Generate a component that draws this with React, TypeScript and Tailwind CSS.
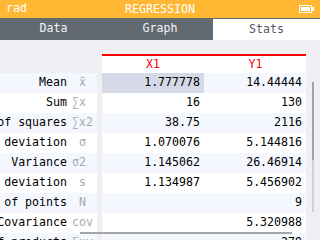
type Row = {
  name: string
  sym: string
  symPad?: boolean
  x: string
  y: string
}

const rows: Row[] = [
  { name: 'Mean', sym: 'x\u0304', symPad: true, x: '1.777778', y: '14.44444' },
  { name: 'Sum', sym: '∑x', x: '16', y: '130' },
  { name: 'Sum of squares', sym: '∑x2', x: '38.75', y: '2116' },
  { name: 'Standard deviation', sym: 'σ', symPad: true, x: '1.070076', y: '5.144816' },
  { name: 'Variance', sym: 'σ2', x: '1.145062', y: '26.46914' },
  { name: 'Sample std deviation', sym: 's', symPad: true, x: '1.134987', y: '5.456902' },
  { name: 'Number of points', sym: 'N', symPad: true, x: '', y: '9' },
  { name: 'Covariance', sym: 'cov', x: '', y: '5.320988' },
  { name: 'Sum of products', sym: '∑xy', x: '', y: '279' },
]

function Battery() {
  return (
    <svg width="15" height="8" viewBox="0 0 15 8" className="block">
      <rect x="0.5" y="0.5" width="12" height="7" fill="none" stroke="white" />
      <rect x="2" y="2" width="9" height="4" fill="white" />
      <rect x="13" y="2" width="2" height="4" fill="white" />
    </svg>
  )
}

export default function App() {
  return (
    <div
      className="relative w-[320px] h-[240px] overflow-hidden bg-[#eeeef3] text-[11.6px] leading-none"
      style={{ fontFamily: '"DejaVu Sans Mono", "Liberation Mono", monospace' }}
    >
      {/* Title bar */}
      <div className="h-[18px] bg-[#ffb734] flex items-center justify-between px-[6px] text-white">
        <span>rad</span>
        <span className="absolute left-0 right-0 text-center top-[4px]">REGRESSION</span>
        <Battery />
      </div>

      {/* Tabs */}
      <div className="h-[22px] bg-[#616971] flex">
        <div className="w-[107px] flex items-center justify-center text-[#f4f4f6]">Data</div>
        <div className="w-[106px] flex items-center justify-center text-[#f4f4f6]">Graph</div>
        <div className="w-[107px] mt-[1px] bg-white flex items-center justify-center text-[#555b62]">Stats</div>
      </div>

      {/* Table */}
      <div className="mt-[14px] flex flex-col">
        <div className="flex h-[19px]">
          <div className="w-[102px]" />
          <div className="w-[102px] bg-white border-t-2 border-[#ff0000] flex items-center justify-center text-[#ff0000]">X1</div>
          <div className="w-[1px] bg-white border-t-2 border-[#ff0000]" />
          <div className="w-[101px] bg-white border-t-2 border-[#ff0000] flex items-center justify-center text-[#ff0000]">Y1</div>
        </div>

        {rows.map((r, i) => {
          const bg = i % 2 === 0 ? 'bg-[#f5f7fe]' : 'bg-white'
          return (
            <div key={r.name} className="flex h-[20px] shrink-0">
              <div className={`w-[97px] flex items-center ${bg}`}>
                <div className="w-[67px] flex justify-end overflow-hidden whitespace-nowrap text-black">
                  <span className="shrink-0">{r.name}</span>
                </div>
                <span className={`ml-[5px] text-[#a8a8ad] whitespace-nowrap ${r.symPad ? 'pl-[7px]' : ''}`}>{r.sym}</span>
              </div>
              <div className="w-[5px]" />
              <div className={`w-[102px] flex items-center justify-end pr-[4px] text-black ${i === 0 ? 'bg-[#d5d8e6]' : bg}`}>
                {r.x}
              </div>
              <div className={`w-[1px] ${bg}`} />
              <div className={`w-[101px] flex items-center justify-end pr-[4px] text-black ${bg}`}>{r.y}</div>
            </div>
          )
        })}
      </div>

      {/* Scroll indicators */}
      <div className="absolute left-[312px] top-[82px] w-[2px] h-[130px] bg-[#cfcfd6]">
        <div className="h-[78px] bg-[#a4a4a8]" />
      </div>
      <div className="absolute left-[80px] top-[232px] w-[212px] h-[2px] bg-[#a4a4a8]" />
    </div>
  )
}
